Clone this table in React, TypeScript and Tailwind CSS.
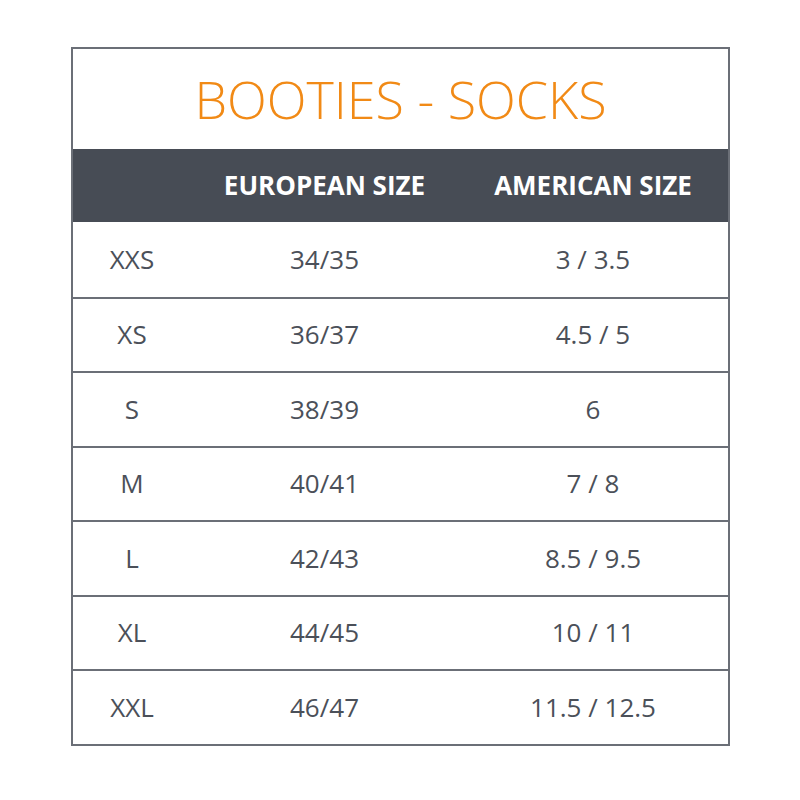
const rows: [string, string, string][] = [
  ["XXS", "34/35", "3 / 3.5"],
  ["XS", "36/37", "4.5 / 5"],
  ["S", "38/39", "6"],
  ["M", "40/41", "7 / 8"],
  ["L", "42/43", "8.5 / 9.5"],
  ["XL", "44/45", "10 / 11"],
  ["XXL", "46/47", "11.5 / 12.5"],
];

export default function App() {
  return (
    <div className="w-[800px] h-[800px] bg-white pt-[47px] pl-[71px] font-['Open_Sans',sans-serif]">
      <div className="w-[659px] border-2 border-[#6b6f77]">
        <div className="h-[100px] flex items-center justify-center text-[52px] font-light text-[#f18a16]">
          BOOTIES - SOCKS
        </div>
        <div className="h-[73px] bg-[#474c55] grid grid-cols-[118px_267px_1fr] items-center text-white font-bold text-[26px]">
          <div />
          <div className="text-center">EUROPEAN SIZE</div>
          <div className="text-center">AMERICAN SIZE</div>
        </div>
        {rows.map((r, i) => (
          <div
            key={r[0]}
            className={`h-[74.5px] grid grid-cols-[118px_267px_1fr] items-center text-[26px] text-[#4b5059] ${i > 0 ? "border-t-2 border-[#6b6f77]" : ""}`}
          >
            <div className="text-center">{r[0]}</div>
            <div className="text-center">{r[1]}</div>
            <div className="text-center">{r[2]}</div>
          </div>
        ))}
      </div>
    </div>
  );
}
